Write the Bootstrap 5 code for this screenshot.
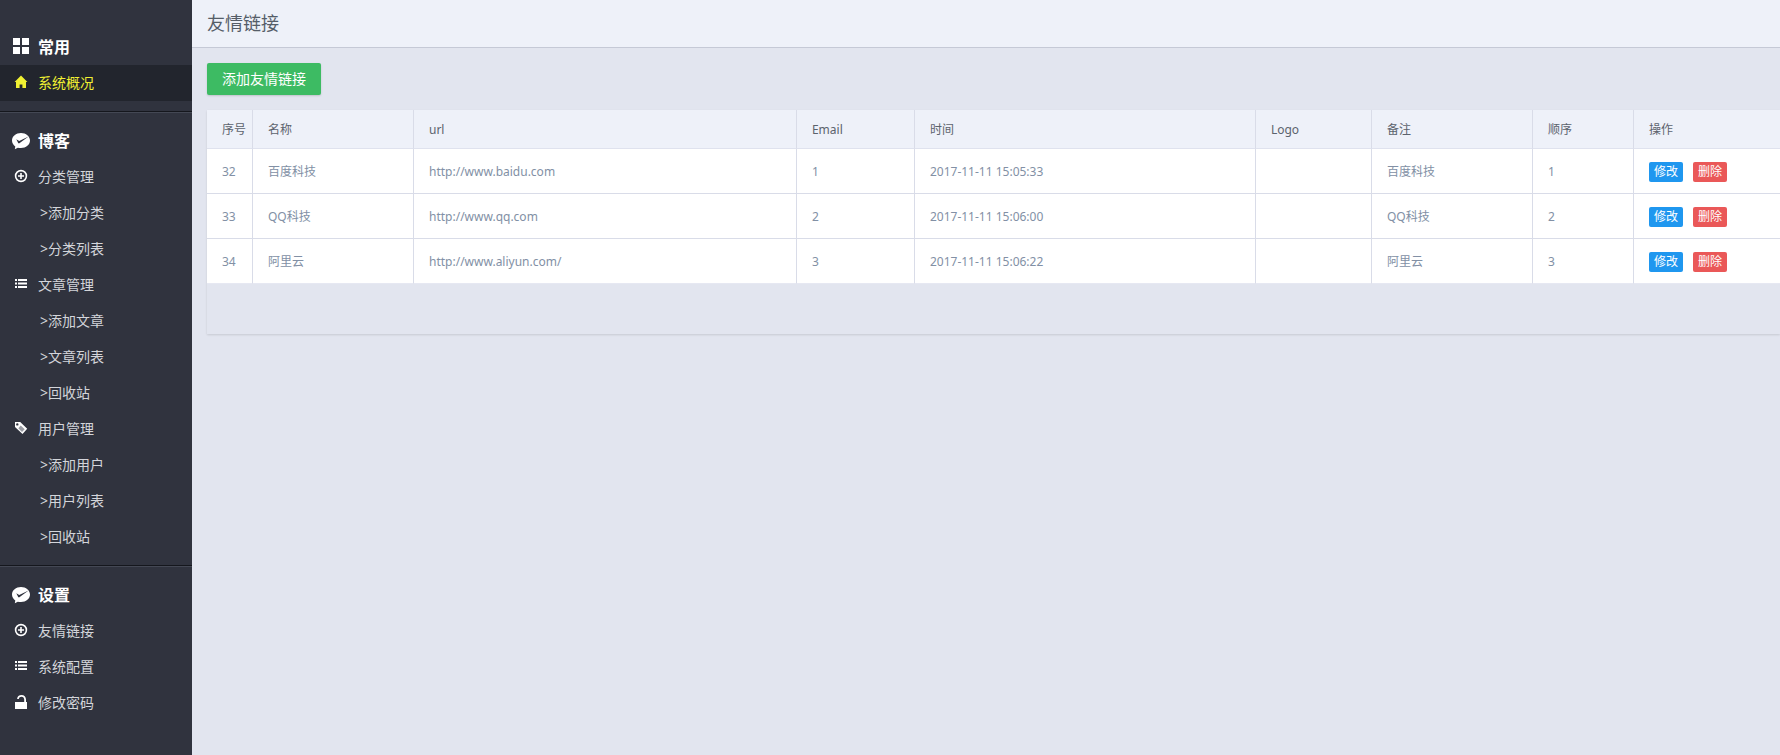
<!DOCTYPE html>
<html lang="zh-CN">
<head>
<meta charset="utf-8">
<meta name="viewport" content="width=device-width, initial-scale=1">
<title>友情链接</title>
<link rel="stylesheet" href="https://cdn.jsdelivr.net/npm/bootstrap@5.3.0/dist/css/bootstrap.min.css">
<style>
body { font-family: "Noto Sans", "Noto Sans CJK SC", sans-serif; font-size: 14px; background: #e2e5ef; color: #555d68; }
.side { width: 192px; background: #30333e; padding-top: 18px; }
.side section { padding: 11px 0 10px; border-bottom: 1px solid #15171d; }
.side section + section { border-top: 1px solid #444854; padding-top: 10px; }
.side section:last-child { border-bottom: 0; }
.side h2, .side a { height: 36px; line-height: 36px; margin: 0; padding-left: 12px; gap: 8px; }
.side h2 { font-size: 16px; font-weight: 700; color: #fff; }
.side a { font-size: 14px; color: #d3d5da; text-decoration: none; }
.side a.sub-item { padding-left: 40px; }
.side a.active { background: #22252d; color: #f0f032; }
.side svg { width: 18px; height: 18px; flex: none; fill: #fff; }
.side a svg { margin-bottom: 2px; }
.side a.active svg { fill: #f0f032; }
.page-head { height: 48px; background: #eef1f9; border-bottom: 1px solid #c5c9d6; padding-left: 15px; }
.page-head h1 { font-size: 18px; font-weight: 400; line-height: 47px; margin: 0; }
.content { padding: 15px 0 0 15px; }
.btn-add { height: 32px; padding: 0 15px; line-height: 32px; font-size: 14px; color: #fff; background: #3dbb63; border: 0; border-radius: 2px; box-shadow: 0 1px 2px rgba(0,0,0,.15); }
.btn-add:hover { background: #35a857; color: #fff; }
.panel { margin-top: 15px; padding-bottom: 50px; box-shadow: 0 1px 2px rgba(0,0,0,.12); }
.links-table { table-layout: fixed; width: 100%; font-size: 12px; line-height: 20px; border-collapse: separate; border-spacing: 0; }
.links-table th, .links-table td { padding: 2px 0 0 15px; border-right: 1px solid #d9dce8; white-space: nowrap; }
.links-table th:last-child, .links-table td:last-child { border-right: 0; }
.links-table th { height: 39px; font-weight: 400; background: #eef1f9; border-bottom: 1px solid #dfe2ee; color: #5c636d; }
.links-table td { height: 45px; background: #fff; border-bottom: 1px solid #d9dce8; color: #8290a5; }
.links-table tr:last-child td { border-bottom-color: #e6e8f2; }
.actions { gap: 10px; }
.btn-row { width: 34px; height: 20px; padding: 0; font-size: 12px; line-height: 20px; color: #fff; border: 0; border-radius: 2px; }
.btn-edit { background: #1f97ef; }
.btn-del { background: #ea5858; }
.c-id { width: 46px; } .c-name { width: 161px; } .c-mail { width: 118px; } .c-time { width: 341px; }
.c-logo { width: 116px; } .c-order { width: 101px; } .c-act { width: 146px; }
</style>
</head>
<body>
<svg class="d-none" aria-hidden="true">
  <symbol id="i-grid" viewBox="0 0 18 18"><path d="M1 0h7v7H1zM10 0h7v7h-7zM1 9h7v7H1zM10 9h7v7h-7z"/></symbol>
  <symbol id="i-home" viewBox="0 0 18 18"><path d="M9 2.500 15.400 9H14v6h-3.600v-3.600H7.600V15H4V9H2.600z"/></symbol>
  <symbol id="i-chat" viewBox="0 0 18 18"><path d="M9 1C4 1 0 4.300 0 8.600c0 2.500 1.300 4.500 3.300 5.900L2.800 17.200l3-1.500c1 .3 2.100.4 3.200.4 5 0 9-3.300 9-7.500S14 1 9 1z"/><path fill="#30333e" d="M4.300 7.300 7.200 8.900 16.600 4.600 7.700 11.100c-.6.400-1.100.4-1.500-.2z"/></symbol>
  <symbol id="i-plus" viewBox="0 0 18 18"><path fill-rule="evenodd" d="M9 2.800a6.200 6.200 0 1 0 0 12.400A6.200 6.200 0 0 0 9 2.800zm0 1.600a4.600 4.600 0 1 1 0 9.200 4.600 4.600 0 0 1 0-9.200zM8.200 6v2.200H6v1.600h2.200V12h1.600V9.800H12V8.200H9.800V6z"/></symbol>
  <symbol id="i-list" viewBox="0 0 18 18"><path d="M3 4h2v2H3zM6 4h9v2H6zM3 7.500h2v2H3zM6 7.500h9v2H6zM3 11h2v2H3zM6 11h9v2H6z"/></symbol>
  <symbol id="i-tag" viewBox="0 0 18 18"><path fill-rule="evenodd" d="M3 3h5.200l7 6.800-4.700 5.200L3 8zm2.300 1.200a1.200 1.200 0 1 0 0 2.400 1.200 1.200 0 0 0 0-2.400z"/><path fill="#9a9ca3" d="m8.700 6.600 4 3.700-2.700 2.800L6.300 9.200z"/></symbol>
  <symbol id="i-lock" viewBox="0 0 18 18"><path d="M3 9h9.200V6.600c0-1.700-1-2.900-2.700-2.900-1.500 0-2.500.9-2.700 2.300H5.100C5.300 3.600 7 2 9.500 2 12.200 2 14 3.800 14 6.500V9h1v7H3z"/></symbol>
</svg>
<div class="d-flex min-vh-100">
  <nav class="side flex-shrink-0" aria-label="主菜单">
    <section>
      <h2 class="d-flex align-items-center"><svg><use href="#i-grid"/></svg>常用</h2>
      <a class="d-flex align-items-center active" href="#"><svg><use href="#i-home"/></svg>系统概况</a>
    </section>
    <section>
      <h2 class="d-flex align-items-center"><svg><use href="#i-chat"/></svg>博客</h2>
      <a class="d-flex align-items-center" href="#"><svg><use href="#i-plus"/></svg>分类管理</a>
      <a class="d-block sub-item" href="#">&gt;添加分类</a>
      <a class="d-block sub-item" href="#">&gt;分类列表</a>
      <a class="d-flex align-items-center" href="#"><svg><use href="#i-list"/></svg>文章管理</a>
      <a class="d-block sub-item" href="#">&gt;添加文章</a>
      <a class="d-block sub-item" href="#">&gt;文章列表</a>
      <a class="d-block sub-item" href="#">&gt;回收站</a>
      <a class="d-flex align-items-center" href="#"><svg><use href="#i-tag"/></svg>用户管理</a>
      <a class="d-block sub-item" href="#">&gt;添加用户</a>
      <a class="d-block sub-item" href="#">&gt;用户列表</a>
      <a class="d-block sub-item" href="#">&gt;回收站</a>
    </section>
    <section>
      <h2 class="d-flex align-items-center"><svg><use href="#i-chat"/></svg>设置</h2>
      <a class="d-flex align-items-center" href="#"><svg><use href="#i-plus"/></svg>友情链接</a>
      <a class="d-flex align-items-center" href="#"><svg><use href="#i-list"/></svg>系统配置</a>
      <a class="d-flex align-items-center" href="#"><svg><use href="#i-lock"/></svg>修改密码</a>
    </section>
  </nav>
  <main class="flex-grow-1">
    <header class="page-head"><h1>友情链接</h1></header>
    <div class="content">
      <button type="button" class="btn btn-add d-block">添加友情链接</button>
      <div class="panel">
        <table class="links-table">
          <colgroup><col class="c-id"><col class="c-name"><col><col class="c-mail"><col class="c-time"><col class="c-logo"><col class="c-name"><col class="c-order"><col class="c-act"></colgroup>
          <thead>
            <tr><th>序号</th><th>名称</th><th>url</th><th>Email</th><th>时间</th><th>Logo</th><th>备注</th><th>顺序</th><th>操作</th></tr>
          </thead>
          <tbody>
            <tr><td>32</td><td>百度科技</td><td>http://www.baidu.com</td><td>1</td><td>2017-11-11 15:05:33</td><td></td><td>百度科技</td><td>1</td>
              <td><div class="d-flex actions"><button type="button" class="btn btn-row btn-edit">修改</button><button type="button" class="btn btn-row btn-del">删除</button></div></td></tr>
            <tr><td>33</td><td>QQ科技</td><td>http://www.qq.com</td><td>2</td><td>2017-11-11 15:06:00</td><td></td><td>QQ科技</td><td>2</td>
              <td><div class="d-flex actions"><button type="button" class="btn btn-row btn-edit">修改</button><button type="button" class="btn btn-row btn-del">删除</button></div></td></tr>
            <tr><td>34</td><td>阿里云</td><td>http://www.aliyun.com/</td><td>3</td><td>2017-11-11 15:06:22</td><td></td><td>阿里云</td><td>3</td>
              <td><div class="d-flex actions"><button type="button" class="btn btn-row btn-edit">修改</button><button type="button" class="btn btn-row btn-del">删除</button></div></td></tr>
          </tbody>
        </table>
      </div>
    </div>
  </main>
</div>
<script src="https://cdn.jsdelivr.net/npm/bootstrap@5.3.0/dist/js/bootstrap.bundle.min.js"></script>
</body>
</html>
